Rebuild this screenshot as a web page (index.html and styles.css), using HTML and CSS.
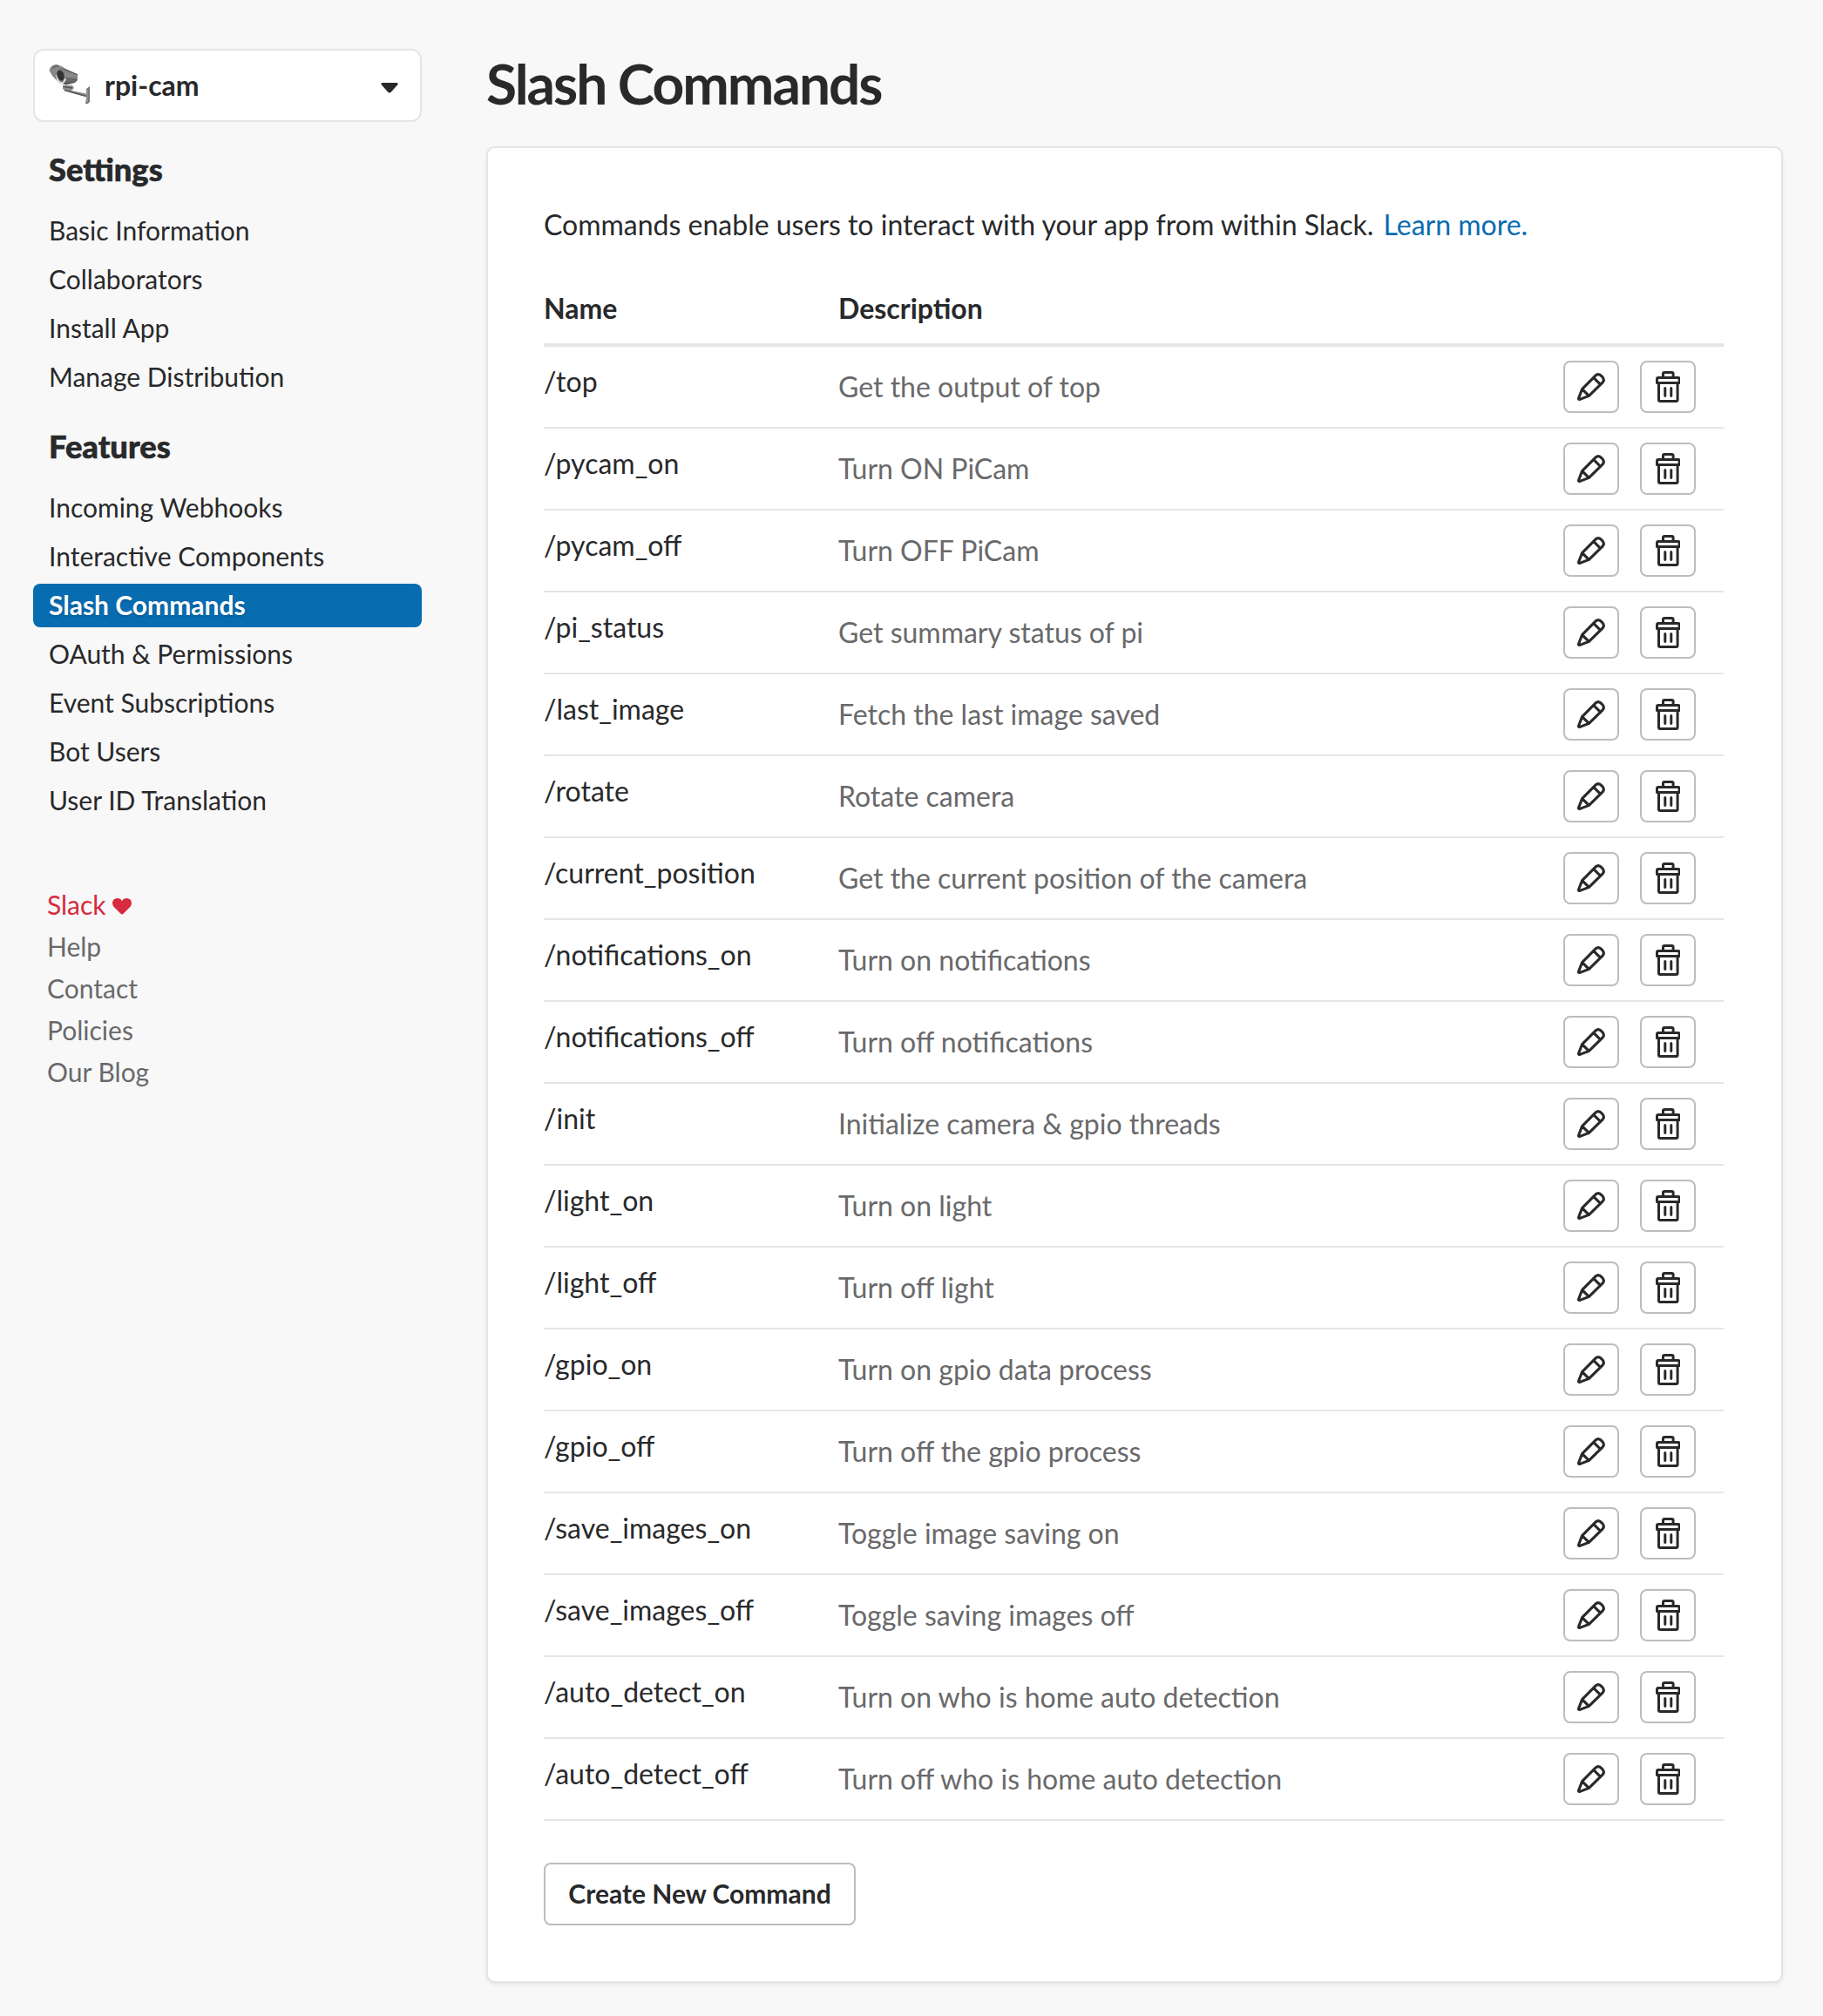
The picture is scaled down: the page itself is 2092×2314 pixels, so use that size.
FILE: index.html
```html
<!DOCTYPE html>
<html lang="en">
<head>
<meta charset="utf-8">
<title>Slash Commands</title>
<link rel="stylesheet" href="styles.css">
</head>
<body>
<svg class="sprite" aria-hidden="true">
  <symbol id="pencil" viewBox="0 0 32 32"><path fill="none" stroke="currentColor" stroke-width="3.1" stroke-linejoin="round" stroke-linecap="round" d="M5.6 18.6L21.2 2.8Q24.6 0 28.1 3.9Q32 7.4 29.2 10.9L13.4 26.4L3 30.4Q1.2 30.8 1.6 29Z M18.6 5.4L26.6 13.4M5.6 18.6L13.4 26.4"/></symbol>
  <symbol id="trash" viewBox="0 0 28.6 36"><path fill="none" stroke="currentColor" stroke-width="3" stroke-linejoin="round" stroke-linecap="round" d="M1.5 13.4V9Q1.5 7.4 3 7.4H25.6Q27.1 7.4 27.1 9V13.4Z M8.5 7.4V3Q8.5 1.5 10.1 1.5H18.5Q20.1 1.5 20.1 3V7.4 M3.5 13.4V33Q3.5 34.5 5.1 34.5H23.5Q25.1 34.5 25.1 33V13.4 M10.8 19.4V28.6M17.8 19.4V28.6"/></symbol>
</svg>
<div class="layout">
  <aside class="sidebar">
    <button class="app-select">
      <svg class="app-icon" viewBox="0 0 48 48">
        <defs><linearGradient id="metal" x1="0" y1="0" x2="0" y2="1"><stop offset="0" stop-color="#6c6c6c"/><stop offset=".55" stop-color="#8c8c8c"/><stop offset="1" stop-color="#4c4c4c"/></linearGradient></defs>
        <path d="M16 25H27L29 28L26 31L43 34.500V38L19 31.500L16 29Z" fill="#8e8e8e"/>
        <path d="M18 30.500L43 37.500M17 26.500L27 28" stroke="#555" stroke-width="1.300"/>
        <path d="M43 29L47 26V44L45 46H42L43 40Z" fill="#777"/>
        <path d="M44 30V44" stroke="#aaa" stroke-width="1"/>
        <path d="M8 1L33 12V19L30 22L20 24.500L12 22L4 14L1 8Z" fill="url(#metal)"/>
        <path d="M.5 8Q2 1 9 1L18 4.500Q11 5 9 11L8 18L3 12Z" fill="#888"/>
        <path d="M4 6Q7 2 12 3" fill="none" stroke="#666" stroke-width="1.500"/>
        <path d="M17 6L33 13M19 17L32 19" stroke="#555" stroke-width="1"/>
        <path d="M9.500 13Q9 21 15 22.500Q18 21.500 19 17" fill="none" stroke="#ddd" stroke-width="2"/>
        <ellipse cx="13.500" cy="13.500" rx="4" ry="6" fill="#333" transform="rotate(-18 13.500 13.500)"/>
      </svg>
      <span class="app-name">rpi-cam</span>
      <svg class="caret" viewBox="0 0 20 12"><path d="M1.500 0H18.500Q20.500 .5 19.200 2.300L12 10.600Q10 12.600 8 10.600L.8 2.300Q-.5 .5 1.500 0Z"/></svg>
    </button>
    <h4 class="nav-title">Settings</h4>
    <nav class="nav">
      <a>Basic Information</a><a>Collaborators</a><a>Install App</a><a>Manage Distribution</a>
    </nav>
    <h4 class="nav-title">Features</h4>
    <nav class="nav">
      <a>Incoming Webhooks</a><a>Interactive Components</a><a class="active">Slash Commands</a><a>OAuth &amp; Permissions</a><a>Event Subscriptions</a><a>Bot Users</a><a>User ID Translation</a>
    </nav>
    <nav class="links">
      <a class="love">Slack <svg class="heart" viewBox="0 0 22 19"><path d="M11 18.500Q10.300 18.500 9.500 17.700L1.700 9.900Q0 8 0 5.700Q.2 .2 5.600 0Q9.300 .1 11 3.200Q12.700 .1 16.400 0Q21.800 .2 22 5.700Q22 8 20.300 9.900L12.500 17.700Q11.700 18.500 11 18.500Z"/></svg></a>
      <a>Help</a><a>Contact</a><a>Policies</a><a>Our Blog</a>
    </nav>
  </aside>
  <main class="main">
    <h1 class="title">Slash Commands</h1>
    <section class="card">
      <p class="intro">Commands enable users to interact with your app from within Slack. <a>Learn more.</a></p>
      <div class="head"><span>Name</span><span>Description</span></div>
      <div class="rows" id="rows"></div>
      <button class="create">Create New Command</button>
    </section>
  </main>
</div>
<script src="commands.js"></script>
</body>
</html>
```
FILE: styles.css
```css
* { box-sizing: border-box; }
body { margin: 0; background: #f8f8f8; color: #28292b; font-family: Lato, sans-serif; font-size: 32px; }
button { font: inherit; color: inherit; background: #fff; padding: 0; margin: 0; }
.sprite { display: none; }
.layout { display: flex; gap: 74px; padding: 56px 46px 38px 38px; height: 2314px; }
.sidebar { width: 446px; flex: none; }
.app-select { display: flex; align-items: center; width: 446px; height: 84px; border: 2px solid #e5e5e5; border-radius: 12px; padding: 0 25px 0 16px; text-align: left; }
.app-icon { width: 48px; height: 48px; margin-top: -3px; }
.app-name { flex: 1; margin-left: 16px; font-weight: 700; line-height: 40px; }
.caret { width: 20px; height: 12px; fill: currentColor; margin-top: 5px; }
.nav-title { margin: 32px 0 24px; padding-left: 18px; font-size: 36.3px; font-weight: 900; line-height: 44px; -webkit-text-stroke: .6px currentColor; }
.nav { display: flex; flex-direction: column; gap: 6px; font-size: 30px; line-height: 48px; }
.nav a { height: 50px; padding-left: 18px; border-radius: 8px; }
.nav .active { background: #086cb1; color: #fff; font-weight: 700; text-shadow: 0 2px 2px rgba(0,0,0,.15); }
.links { display: flex; flex-direction: column; margin-top: 70px; padding-left: 16px; font-size: 30px; line-height: 48px; color: #69696b; }
.links .love { color: #d72b3f; }
.heart { width: 22px; height: 19px; fill: currentColor; }
.main { flex: 1; }
.title { margin: 0; font-size: 64px; line-height: 80px; letter-spacing: -2px; font-weight: 700; }
.card { margin-top: 32px; height: 2108px; background: #fff; border: 2px solid #e5e5e5; border-radius: 10px; padding: 64px 66px 64px 64px; box-shadow: 0 2px 4px rgba(0,0,0,.08); }
.intro { margin: 0; line-height: 48px; }
.intro a { color: #086cb1; margin-left: 3px; }
.head { display: grid; grid-template-columns: 338px 1fr; margin-top: 48px; height: 68px; line-height: 48px; border-bottom: 4px solid #e5e5e5; font-weight: 700; }
.row { display: grid; grid-template-columns: 338px 1fr 64px 64px; height: 94px; border-bottom: 2px solid #e5e5e5; padding: 16px 32px 0 0; }
.cmd { line-height: 48px; }
.desc { line-height: 48px; color: #69696b; padding-top: 6px; }
.row button { width: 64px; height: 60px; border: 2px solid #bdbdbd; border-radius: 8px; display: flex; align-items: center; justify-content: center; }
.row button:nth-child(3) { margin-left: -24px; }
.pencil { width: 32px; height: 32px; }
.trash { width: 28.6px; height: 36px; }
.create { margin-top: 48px; width: 358px; height: 72px; border: 2px solid #bdbdbd; border-radius: 8px; font-size: 30px; font-weight: 700; padding-bottom: 3px; }
```
FILE: commands.js
```js
const commands = [
  ["/top", "Get the output of top"],
  ["/pycam_on", "Turn ON PiCam"],
  ["/pycam_off", "Turn OFF PiCam"],
  ["/pi_status", "Get summary status of pi"],
  ["/last_image", "Fetch the last image saved"],
  ["/rotate", "Rotate camera"],
  ["/current_position", "Get the current position of the camera"],
  ["/notifications_on", "Turn on notifications"],
  ["/notifications_off", "Turn off notifications"],
  ["/init", "Initialize camera & gpio threads"],
  ["/light_on", "Turn on light"],
  ["/light_off", "Turn off light"],
  ["/gpio_on", "Turn on gpio data process"],
  ["/gpio_off", "Turn off the gpio process"],
  ["/save_images_on", "Toggle image saving on"],
  ["/save_images_off", "Toggle saving images off"],
  ["/auto_detect_on", "Turn on who is home auto detection"],
  ["/auto_detect_off", "Turn off who is home auto detection"]
];
document.getElementById("rows").innerHTML = commands.map(([name, text]) => `
  <div class="row">
    <span class="cmd">${name}</span>
    <span class="desc">${text.replace("&", "&amp;")}</span>
    <button aria-label="Edit"><svg class="pencil"><use href="#pencil"/></svg></button>
    <button aria-label="Delete"><svg class="trash"><use href="#trash"/></svg></button>
  </div>`).join("");
```
